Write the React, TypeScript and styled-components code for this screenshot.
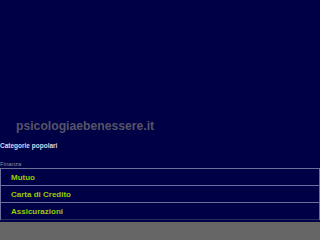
import styled, { createGlobalStyle } from "styled-components";

const GlobalStyle = createGlobalStyle`
  html, body {
    margin: 0;
    padding: 0;
    background-color: #666666;
    font-family: "Liberation Sans", Arial, sans-serif;
  }
`;

const links = ["Mutuo", "Carta di Credito", "Assicurazioni"];

export default function App() {
  return (
    <>
      <GlobalStyle />
      <Page>
        <Banner />
        <Logo>psicologiaebenessere.it</Logo>
        <Heading>Categorie popolari</Heading>
        <SectionLabel>Finanza</SectionLabel>
        <List>
          {links.map((l) => (
            <Item key={l}>
              <ItemLink href="#">{l}</ItemLink>
            </Item>
          ))}
        </List>
      </Page>
    </>
  );
}

const Page = styled.div`
  background-color: #000046;
  padding-bottom: 2px;
`;
const Banner = styled.div`
  height: 115px;
`;
const Logo = styled.div`
  padding-left: 16px;
  font-size: 12.2px;
  font-weight: bold;
  line-height: 22px;
  color: #555566;
`;
const Heading = styled.div`
  margin-top: 3px;
  font-size: 6.5px;
  font-weight: bold;
  line-height: 12px;
  color: #d8d8e8;
`;
const SectionLabel = styled.div`
  margin-top: 8px;
  font-size: 6px;
  line-height: 8px;
  color: #8a8a9a;
`;
const List = styled.ul`
  list-style: none;
  margin: 0;
  padding: 0;
  border: 1px solid #6e6e9e;
  border-bottom: none;
`;
const Item = styled.li`
  height: 16px;
  border-bottom: 1px solid #6e6e9e;
  display: flex;
  align-items: center;
  &:last-child {
    border-bottom: 1px solid #2a2a60;
  }
`;
const ItemLink = styled.a`
  padding-left: 10px;
  font-size: 8px;
  font-weight: bold;
  color: #99cc00;
  text-decoration: none;
`;
